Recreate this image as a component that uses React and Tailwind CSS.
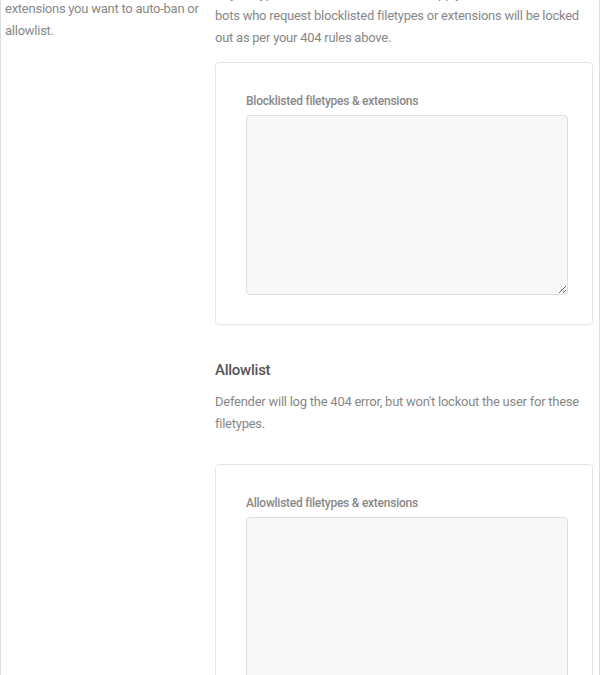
export default function App() {
  return (
    <div className="w-[600px] h-[675px] overflow-hidden bg-white border-x border-[#dddddd] font-['Roboto',sans-serif] tracking-[-0.25px]">
      <div className="flex -mt-[48px]">
        <div className="w-[214px] shrink-0 pl-[4px] pr-[8px] pt-[2px]">
          <p className="text-[13px] leading-[22px] text-[#888888]">
            Choose which filetypes and
            <br />
            specific file names or
            <br />
            extensions you want to auto-ban or
            <br />
            allowlist.
          </p>
        </div>
        <div className="flex-1 pt-[9px]">
          <p className="text-[13px] leading-[22px] text-[#888888]">
            Any filetypes you add here will be auto-banned. Users or
            <br />
            Any filetypes or extensions added here apply, so users or
            <br />
            bots who request blocklisted filetypes or extensions will be locked
            <br />
            out as per your 404 rules above.
          </p>
          <div className="mt-[13px] w-[378px] rounded-[4px] border border-[#e6e6e6] pl-[30px] pt-[30px] pb-[29px]">
            <label className="block text-[12px] leading-[16px] font-medium text-[#888888]">
              Blocklisted filetypes &amp; extensions
            </label>
            <textarea className="mt-[6px] block w-[322px] h-[180px] rounded-[4px] border border-[#dddddd] bg-[#f8f8f8] outline-none" />
          </div>
          <h4 className="mt-[34px] text-[15px] leading-[22px] font-medium text-[#555555]">Allowlist</h4>
          <p className="mt-[10px] w-[378px] text-[13px] leading-[22px] text-[#888888]">
            Defender will log the 404 error, but won't lockout the user for these filetypes.
          </p>
          <div className="mt-[29px] w-[378px] rounded-[4px] border border-[#e6e6e6] pl-[30px] pt-[30px] pb-[29px]">
            <label className="block text-[12px] leading-[16px] font-medium text-[#888888]">
              Allowlisted filetypes &amp; extensions
            </label>
            <textarea className="mt-[6px] block w-[322px] h-[180px] rounded-[4px] border border-[#dddddd] bg-[#f8f8f8] outline-none" />
          </div>
        </div>
      </div>
    </div>
  );
}
